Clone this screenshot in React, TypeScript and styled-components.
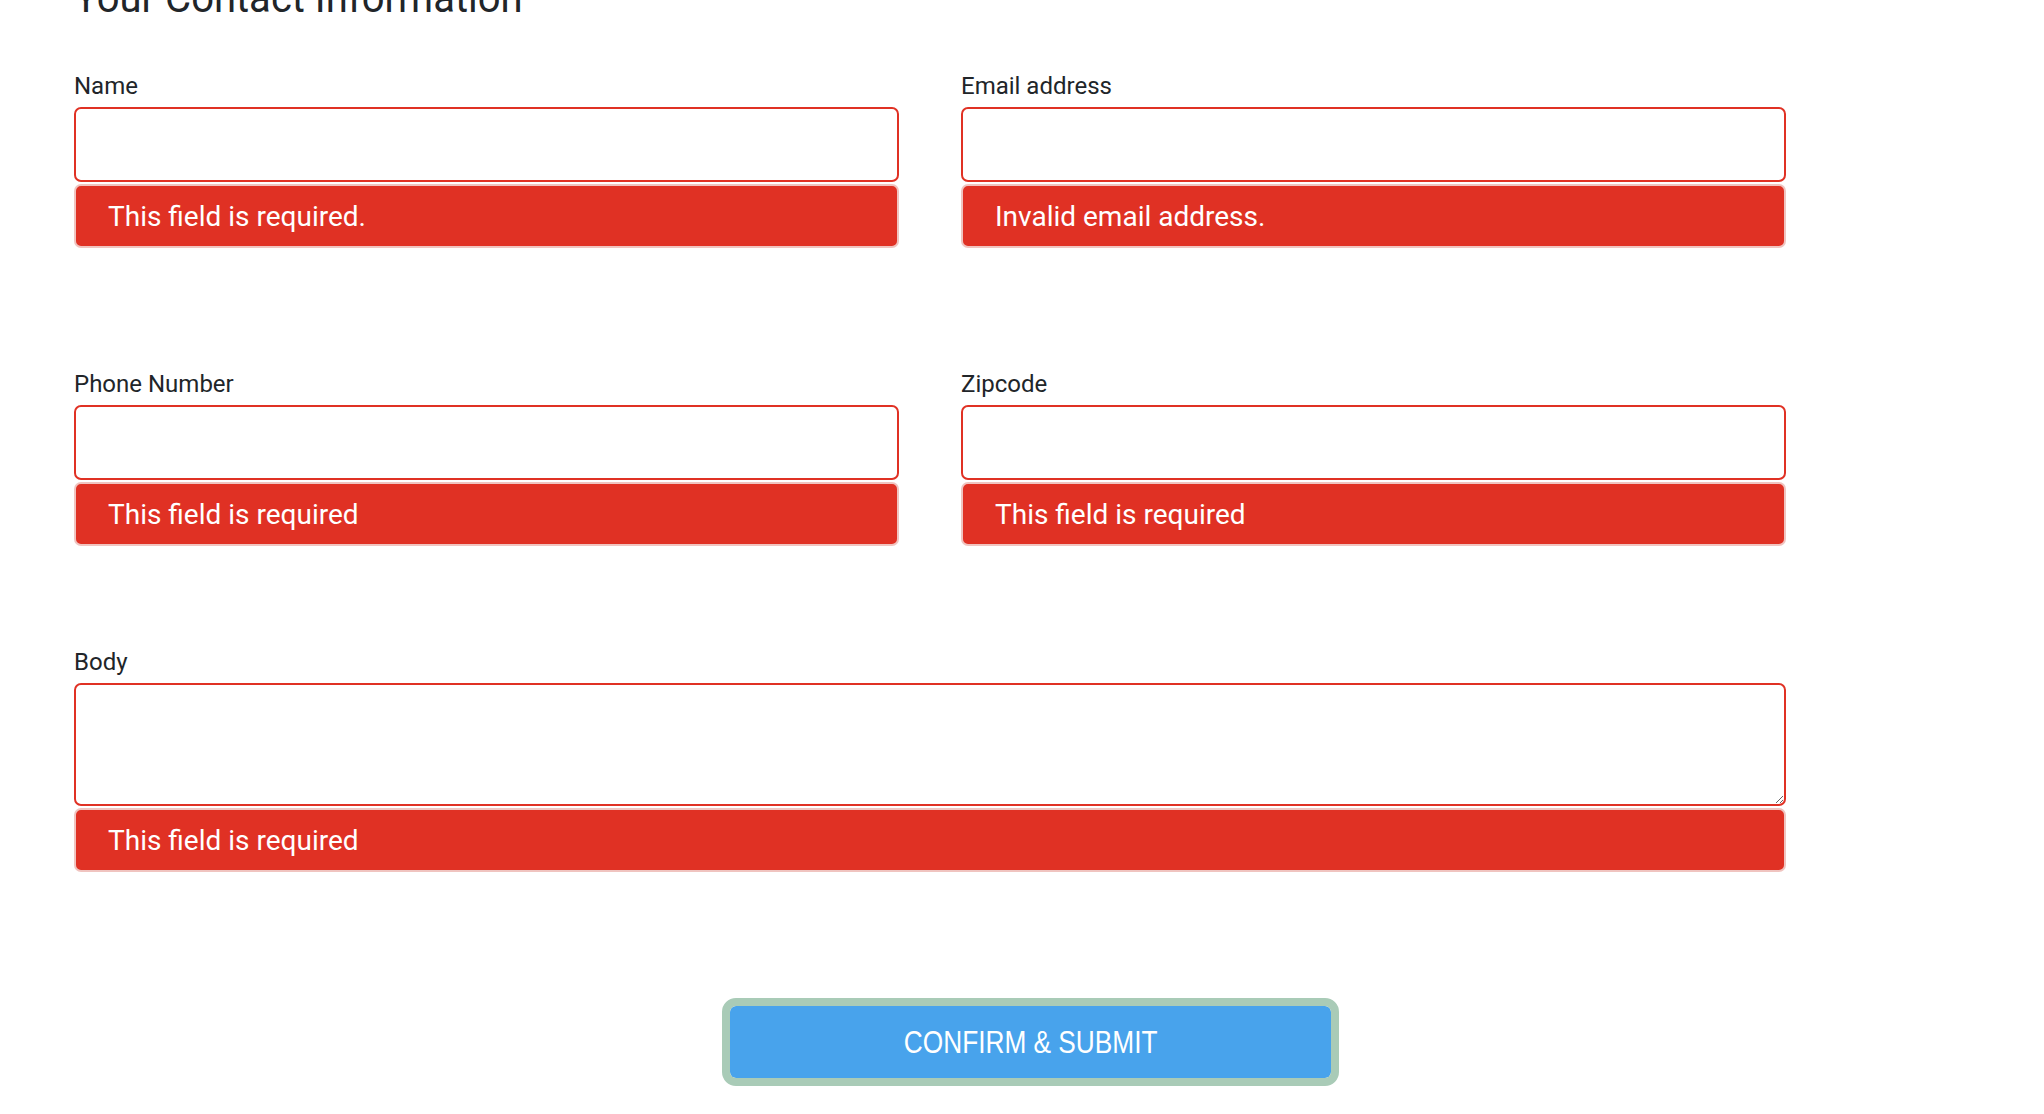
import React from "react";
import styled, { createGlobalStyle } from "styled-components";

const Global = createGlobalStyle`
  html, body { margin: 0; padding: 0; background: #ffffff; }
  body { font-family: Roboto, "Noto Sans", "Liberation Sans", sans-serif; color: #212529; overflow: hidden; }
  * { box-sizing: border-box; }
`;

const Page = styled.div`
  padding: 0 57px 0 74px;
  width: 2044px;
`;

const Heading = styled.h2`
  margin: -24px 0 0;
  font-family: Roboto, sans-serif;
  font-weight: 400;
  font-size: 40px;
  line-height: 46px;
  color: #212529;
`;

const FormGrid = styled.div`
  margin-top: 48px;
  width: 1712px;
  display: grid;
  grid-template-columns: 1fr 1fr;
  column-gap: 62px;
`;

const FieldGroup = styled.div<{ $wide?: boolean; $after: number }>`
  display: flex;
  flex-direction: column;
  grid-column: ${(p) => (p.$wide ? "1 / span 2" : "auto")};
  margin-bottom: ${(p) => p.$after}px;
`;

const Label = styled.label`
  font-family: Roboto, sans-serif;
  font-size: 24px;
  line-height: 33px;
  color: #212529;
  margin-bottom: 4px;
`;

const TextInput = styled.input`
  height: 75px;
  width: 100%;
  border: 2px solid #e03124;
  border-radius: 7px;
  background: #fff;
  outline: none;
  padding: 0 16px;
  font-family: Roboto, sans-serif;
  font-size: 22px;
`;

const TextArea = styled.textarea`
  height: 123px;
  width: 100%;
  border: 2px solid #e03124;
  border-radius: 7px;
  background: #fff;
  outline: none;
  padding: 12px 16px;
  resize: vertical;
  display: block;
  font-family: Roboto, sans-serif;
  font-size: 22px;
`;

const ErrorBox = styled.div`
  margin-top: 2px;
  height: 64px;
  background: #e03124;
  border: 2px solid #f0c4c0;
  border-radius: 7px;
  display: flex;
  align-items: center;
  padding-left: 32px;
  font-family: Roboto, sans-serif;
  font-size: 28px;
  color: #ffffff;
`;

const ButtonRow = styled.div`
  margin-top: 26px;
  display: flex;
  justify-content: center;
`;

const SubmitButton = styled.button`
  width: 617px;
  height: 88px;
  border: 8px solid #a9cbb7;
  border-radius: 14px;
  background: #48a3ec;
  background-clip: padding-box;
  display: flex;
  align-items: center;
  justify-content: center;
  cursor: pointer;
  padding: 0;
`;

const ButtonInner = styled.span`
  display: inline-block;
  font-family: "Liberation Sans", Arial, sans-serif;
  font-size: 32px;
  color: #ffffff;
  text-transform: uppercase;
  transform: scaleX(0.82);
`;

type Field = {
  label: string;
  error: string;
  wide?: boolean;
  multiline?: boolean;
  after: number;
  type?: string;
};

const fields: Field[] = [
  { label: "Name", error: "This field is required.", after: 120 },
  { label: "Email address", error: "Invalid email address.", after: 120, type: "email" },
  { label: "Phone Number", error: "This field is required", after: 100, type: "tel" },
  { label: "Zipcode", error: "This field is required", after: 100 },
  { label: "Body", error: "This field is required", wide: true, multiline: true, after: 100 },
];

export default function App() {
  return (
    <>
      <Global />
      <Page>
        <Heading>Your Contact Information</Heading>
        <FormGrid>
          {fields.map((f) => (
            <FieldGroup key={f.label} $wide={f.wide} $after={f.after}>
              <Label>{f.label}</Label>
              {f.multiline ? <TextArea /> : <TextInput type={f.type || "text"} />}
              <ErrorBox>{f.error}</ErrorBox>
            </FieldGroup>
          ))}
        </FormGrid>
        <ButtonRow>
          <SubmitButton type="button">
            <ButtonInner>Confirm &amp; Submit</ButtonInner>
          </SubmitButton>
        </ButtonRow>
      </Page>
    </>
  );
}
